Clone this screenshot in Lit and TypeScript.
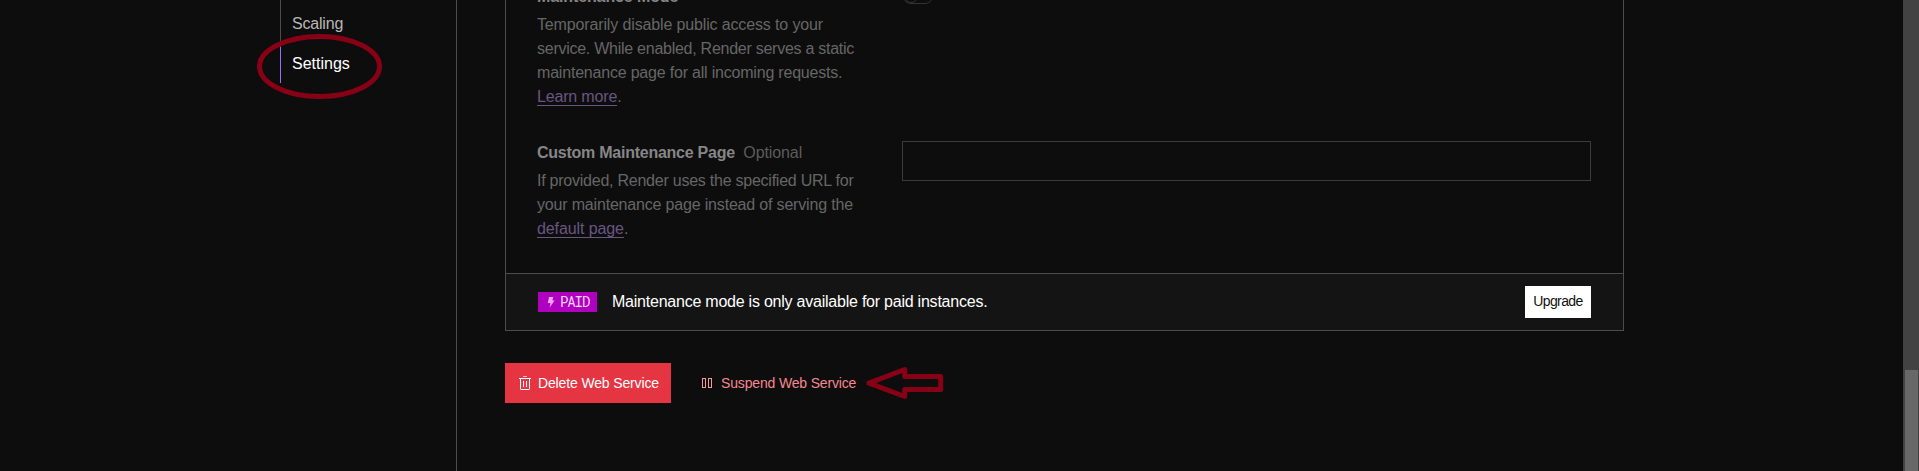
import { LitElement, html, css, svg } from "lit";
import { customElement } from "lit/decorators.js";

const boltIcon = html`<svg width="8" height="12" viewBox="0 0 8 12"><path d="M2 1h4.2L5.4 4.4H7.6L2.6 11.4 3.4 7H.8z" fill="#f5a6fb"/></svg>`;
const trashIcon = html`<svg width="12" height="16" viewBox="0 0 12 16" fill="none" stroke="#fff"><path d="M0 3.5h12M1.5 3.5v10.4q0 .6.6.6h7.8q.6 0 .6-.6V3.5M4.5 6v6M7.5 6v6"/><path d="M4 1.5h4" opacity=".7"/></svg>`;
const pauseIcon = html`<svg width="10" height="10" viewBox="0 0 10 10" fill="none" stroke="#f4989d"><rect x=".5" y=".5" width="3" height="9"/><rect x="6.5" y=".5" width="3" height="9"/></svg>`;
const marks = svg`
  <ellipse cx="319.5" cy="66.5" rx="60" ry="30"/>
  <path d="M869 383.2 904.7 369.5V376.5H940.7V389.5H904.7V396.5Z" stroke-linejoin="round"/>`;

@customElement("app-root")
export class AppRoot extends LitElement {
  static styles = css`
    :host { display: block; position: relative; height: 471px; overflow: hidden; background: #0d0d0d;
      font: 16px/24px "Liberation Sans", Arial, sans-serif; color: #fff; }
    * { box-sizing: border-box; }
    .page { display: flex; height: 471px; }
    .side { width: 457px; border-right: 1px solid #4c4c4c; padding-left: 280px; flex: none; }
    .item { height: 36px; padding: 0 0 0 11px; line-height: 34px; border-left: 1px solid #9b6dff; }
    .item.first { height: 47px; padding-top: 7px; border-color: #4c4c4c; color: #b8b8b8; }
    .scaling { letter-spacing: -0.2px; }
    .settings { letter-spacing: 0; }
    .main { flex: 1; padding-left: 48px; }
    .card { width: 1119px; border: 1px solid #4c4c4c; border-top: 0; }
    .body { height: 273px; overflow: hidden; padding-left: 31px; }
    .row { display: grid; grid-template-columns: 365px 689px; }
    .row.mode { height: 140px; }
    .copy { display: flex; flex-direction: column; align-items: flex-start; white-space: nowrap; color: #666; padding-top: 1px; }
    .mode .copy { margin-top: -16px; }
    .title { color: #868686; font-weight: 700; height: 28px; }
    .title span { font-weight: 400; color: #5c5c5c; margin-left: 4px; letter-spacing: -0.1px; }
    .t1 { letter-spacing: -0.12px; }
    .t2 { letter-spacing: -0.25px; }
    .l1 { letter-spacing: -0.14px; }
    .l2 { letter-spacing: -0.26px; }
    .l3 { letter-spacing: -0.2px; }
    .l4 { letter-spacing: -0.17px; }
    .l5 { letter-spacing: -0.24px; }
    .l6 { letter-spacing: -0.18px; }
    .l7 { letter-spacing: -0.1px; }
    a { color: #695680; border-bottom: 1px solid #695680; display: inline-block; line-height: 16px; }
    .toggle { width: 30px; height: 16px; margin-top: -12px; margin-left: 1px; border: 1px solid #333; border-radius: 8px; }
    .knob { width: 14px; height: 14px; border: 1px solid #333; border-radius: 50%; }
    .input { height: 40px; margin-top: 1px; border: 1px solid #3b3b3b; width: 689px; }
    .foot { height: 57px; border-top: 1px solid #4c4c4c; background: #141414; display: flex; align-items: center; padding: 0 32px; }
    .badge { width: 59px; height: 20px; background: #b000c0; display: flex; align-items: center; padding-left: 9px; gap: 5px;
      font: 14px/18px "Roboto Mono", "Liberation Mono", monospace; letter-spacing: -1.1px; color: #fbd9fd; }
    .note { margin-left: 15px; flex: 1; white-space: nowrap; letter-spacing: -0.23px; }
    .upgrade { width: 66px; height: 32px; background: #fff; color: #111; font-size: 14px; line-height: 31px; text-align: center; letter-spacing: -0.6px; }
    .actions { display: flex; padding-top: 32px; font-size: 14px; line-height: 40px; }
    .delete { width: 166px; height: 40px; background: #e53543; display: flex; align-items: center; padding-left: 14px; gap: 7px; white-space: nowrap; letter-spacing: -0.14px; }
    .suspend { display: flex; align-items: center; margin-left: 31px; gap: 9px; color: #f4888e; white-space: nowrap; letter-spacing: -0.16px; }
    .scroll { width: 16px; background: #424242; padding: 370px 1px 0 2px; }
    .thumb { height: 101px; background: #686868; }
    .marks { position: absolute; inset: 0; fill: none; stroke: #880015; stroke-width: 5; pointer-events: none; }
  `;

  render() {
    return html`
      <div class="page">
        <nav class="side">
          <div class="item first"><span class="scaling">Scaling</span></div>
          <div class="item"><span class="settings">Settings</span></div>
        </nav>
        <main class="main">
          <section class="card">
            <div class="body">
              <div class="row mode">
                <div class="copy">
                  <div class="title"><b class="t1">Maintenance Mode</b></div>
                  <span class="l1">Temporarily disable public access to your</span>
                  <span class="l2">service. While enabled, Render serves a static</span>
                  <span class="l3">maintenance page for all incoming requests.</span>
                  <span class="l4"><a>Learn more</a>.</span>
                </div>
                <div class="toggle"><div class="knob"></div></div>
              </div>
              <div class="row">
                <div class="copy">
                  <div class="title"><b class="t2">Custom Maintenance Page</b> <span>Optional</span></div>
                  <span class="l5">If provided, Render uses the specified URL for</span>
                  <span class="l6">your maintenance page instead of serving the</span>
                  <span class="l7"><a>default page</a>.</span>
                </div>
                <div class="input"></div>
              </div>
            </div>
            <div class="foot">
              <div class="badge">${boltIcon}<span>PAID</span></div>
              <div class="note">Maintenance mode is only available for paid instances.</div>
              <div class="upgrade">Upgrade</div>
            </div>
          </section>
          <div class="actions">
            <div class="delete">${trashIcon}<span>Delete Web Service</span></div>
            <div class="suspend">${pauseIcon}<span>Suspend Web Service</span></div>
          </div>
        </main>
        <div class="scroll"><div class="thumb"></div></div>
      </div>
      <svg class="marks" width="1919" height="471" viewBox="0 0 1919 471">${marks}</svg>`;
  }
}
